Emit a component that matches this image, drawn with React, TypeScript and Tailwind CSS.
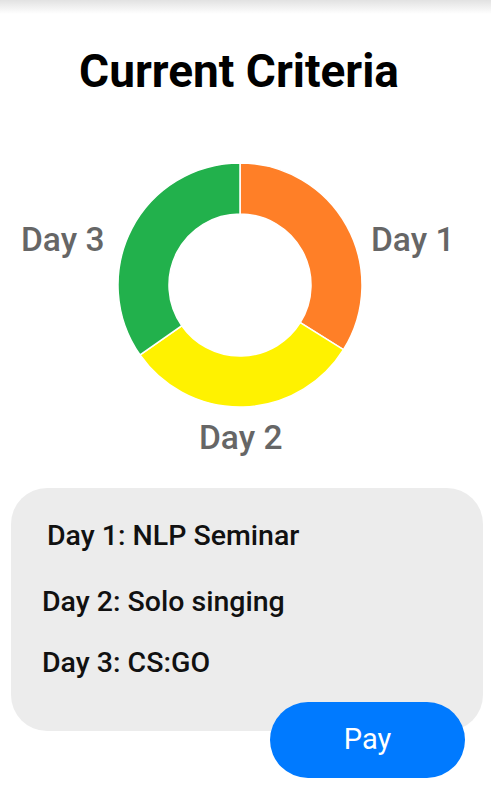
import React from "react";

const cx = 240;
const cy = 155;
const R = 122;
const r = 71;

function pt(rad: number, deg: number) {
  const a = ((deg - 90) * Math.PI) / 180;
  return [cx + rad * Math.cos(a), cy + rad * Math.sin(a)];
}

function arc(start: number, end: number) {
  const [x1, y1] = pt(R, start);
  const [x2, y2] = pt(R, end);
  const [x3, y3] = pt(r, end);
  const [x4, y4] = pt(r, start);
  const large = end - start > 180 ? 1 : 0;
  return `M ${x1} ${y1} A ${R} ${R} 0 ${large} 1 ${x2} ${y2} L ${x3} ${y3} A ${r} ${r} 0 ${large} 0 ${x4} ${y4} Z`;
}

const segs = [
  { s: 0, e: 122, c: "#FF7F27" },
  { s: 122, e: 235, c: "#FFF200" },
  { s: 235, e: 360, c: "#22B14C" },
];

export default function App() {
  return (
    <div className="w-[491px] h-[787px] bg-white flex flex-col overflow-hidden" style={{ fontFamily: "Roboto, 'Liberation Sans', sans-serif" }}>
      <div className="h-[14px] bg-gradient-to-b from-[#e2e2e2] to-white" />
      <h1 className="mt-[30px] text-center text-[46px] leading-[54px] font-bold text-black pr-[13px]">Current Criteria</h1>
      <svg width="491" height="340" viewBox="0 0 491 340" className="mt-[32px] block">
        {segs.map((g, i) => (
          <path key={i} d={arc(g.s, g.e)} fill={g.c} stroke="#ffffff" strokeWidth="1.5" />
        ))}
        <text x="371" y="121" fontSize="33.5" fontWeight="500" fill="#666666" fontFamily="Roboto, sans-serif">Day 1</text>
        <text x="21" y="121" fontSize="33.5" fontWeight="500" fill="#666666" fontFamily="Roboto, sans-serif">Day 3</text>
        <text x="199" y="319" fontSize="33.5" fontWeight="500" fill="#666666" fontFamily="Roboto, sans-serif">Day 2</text>
      </svg>
      <div className="mx-[11px] w-[472px] h-[243px] mt-[18px] bg-[#ececec] rounded-[36px] flex flex-col pt-[31px] text-[28.5px] font-medium text-[#111] leading-[34px]">
        <div className="pl-[36px]">Day 1: NLP Seminar</div>
        <div className="pl-[31px] mt-[32px]">Day 2: Solo singing</div>
        <div className="pl-[31px] mt-[27px]">Day 3: CS:GO</div>
      </div>
      <button className="self-end mr-[26px] -mt-[29px] w-[195px] h-[76px] rounded-full bg-[#007AFF] text-white text-[29px] flex items-center justify-center">
        Pay
      </button>
    </div>
  );
}
